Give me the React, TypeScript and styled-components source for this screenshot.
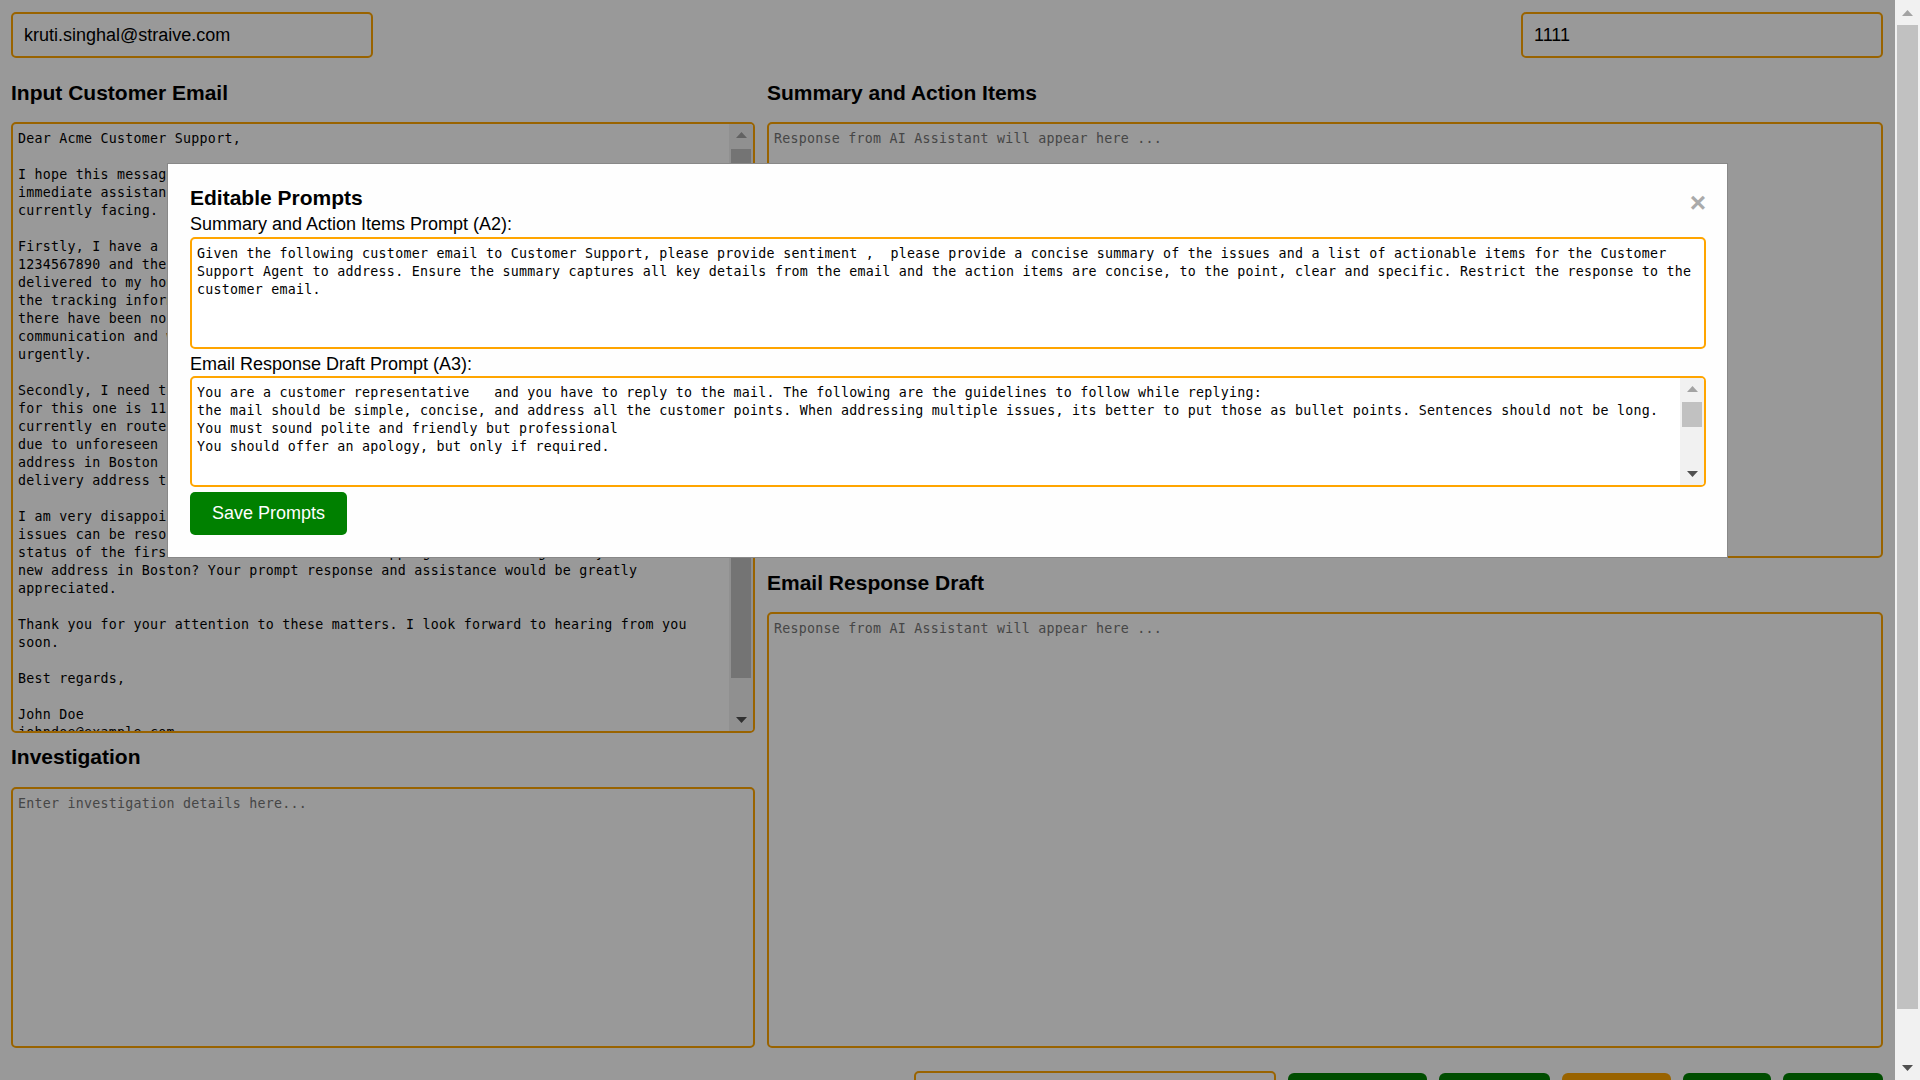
import React from "react";
import styled, { createGlobalStyle } from "styled-components";

const GlobalStyle = createGlobalStyle`
  html, body {
    margin: 0;
    padding: 0;
    background: #ffffff;
    overflow: hidden;
  }
  body {
    font-family: "Liberation Sans", Arial, sans-serif;
    color: #000000;
  }
  *, *::before, *::after {
    box-sizing: border-box;
  }
`;

/* ---------- window frame with its own (drawn) scrollbar ---------- */

const Screen = styled.div`
  display: flex;
  height: 100vh;
  overflow: hidden;
`;

const Viewport = styled.div`
  position: relative;
  flex: 1;
  min-width: 0;
  overflow: hidden;
`;

const Scrollbar = styled.div<{ $width: number }>`
  flex: 0 0 ${(p) => p.$width}px;
  display: flex;
  flex-direction: column;
  background: #f1f1f1;
`;

const ScrollButton = styled.div<{ $size: number }>`
  flex: 0 0 ${(p) => p.$size}px;
  display: flex;
  align-items: center;
  justify-content: center;
`;

const ScrollTrack = styled.div`
  flex: 1;
  min-height: 0;
  padding: 0 2px;
`;

const ScrollThumb = styled.div<{ $offset: number; $length: number }>`
  margin-top: ${(p) => p.$offset}px;
  height: ${(p) => p.$length}px;
  background: #c1c1c1;
`;

function Arrow({ dir, color }: { dir: "up" | "down"; color: string }) {
  return (
    <svg width="11" height="6" viewBox="0 0 11 6" aria-hidden="true">
      <polygon points={dir === "up" ? "5.5,0 11,6 0,6" : "0,0 11,0 5.5,6"} fill={color} />
    </svg>
  );
}

function FakeScrollbar({
  width,
  button,
  offset,
  length,
}: {
  width: number;
  button: number;
  offset: number;
  length: number;
}) {
  return (
    <Scrollbar $width={width}>
      <ScrollButton $size={button}>
        <Arrow dir="up" color="#a3a3a3" />
      </ScrollButton>
      <ScrollTrack>
        <ScrollThumb $offset={offset} $length={length} />
      </ScrollTrack>
      <ScrollButton $size={button}>
        <Arrow dir="down" color="#505050" />
      </ScrollButton>
    </Scrollbar>
  );
}

/* ---------- page ---------- */

const Page = styled.div`
  padding: 12px 12px 30px 11px;
`;

const TopBar = styled.div`
  display: flex;
  justify-content: space-between;
  align-items: center;
`;

const TextField = styled.input<{ $width: number }>`
  width: ${(p) => p.$width}px;
  height: 46px;
  padding: 0 11px;
  border: 2px solid #ffa500;
  border-radius: 5px;
  background: #ffffff;
  color: #000000;
  font-family: "Liberation Sans", Arial, sans-serif;
  font-size: 18px;
  outline: none;
`;

const Columns = styled.div`
  display: grid;
  grid-template-columns: 2fr 3fr;
  column-gap: 12px;
  margin-top: 23px;
`;

const Column = styled.div`
  display: flex;
  flex-direction: column;
  min-width: 0;
`;

const SectionTitle = styled.h3<{ $mt?: number; $mb: number }>`
  margin: ${(p) => p.$mt ?? 0}px 0 ${(p) => p.$mb}px;
  font-size: 21px;
  line-height: 24px;
  font-weight: bold;
  color: #000000;
`;

const FieldBox = styled.div<{ $height: number; $gap?: number }>`
  display: flex;
  height: ${(p) => p.$height}px;
  margin-top: ${(p) => p.$gap ?? 0}px;
  border: 2px solid #ffa500;
  border-radius: 5px;
  background: #ffffff;
  overflow: hidden;
`;

const FieldText = styled.textarea`
  flex: 1;
  min-width: 0;
  height: 100%;
  margin: 0;
  padding: 6px 5px 5px;
  border: none;
  background: transparent;
  color: #000000;
  font-family: "DejaVu Sans Mono", "Liberation Mono", monospace;
  font-size: 13.3px;
  letter-spacing: 0.25px;
  line-height: 18px;
  resize: none;
  outline: none;
  overflow: hidden;
  white-space: pre-wrap;

  &::placeholder {
    color: #757575;
  }
`;

const ActionRow = styled.div`
  display: flex;
  justify-content: flex-end;
  align-items: center;
  gap: 12px;
  margin-top: 23px;
`;

const ActionButton = styled.button<{ $width: number; $tone: "green" | "orange" }>`
  width: ${(p) => p.$width}px;
  height: 42px;
  border: none;
  border-radius: 6px;
  background: ${(p) => (p.$tone === "green" ? "#008000" : "#ffa500")};
  color: #ffffff;
  font-family: "Liberation Sans", Arial, sans-serif;
  font-size: 16px;
  cursor: pointer;
`;

/* ---------- modal ---------- */

const Overlay = styled.div`
  position: absolute;
  inset: 0;
  z-index: 10;
  background: rgba(0, 0, 0, 0.4);
  padding-top: 163px;
`;

const Modal = styled.div`
  width: 1561px;
  margin: 0 auto;
  padding: 20px 21px 22px 22px;
  background: #fefefe;
  border: 1px solid #888888;
  font-family: "Liberation Sans", Arial, sans-serif;
`;

const Close = styled.span`
  float: right;
  margin-top: 3px;
  color: #aaaaaa;
  font-size: 28px;
  line-height: 32px;
  font-weight: bold;
  cursor: pointer;
`;

const ModalTitle = styled.h2`
  margin: 2px 0 0;
  font-size: 21px;
  line-height: 24px;
  font-weight: bold;
  color: #000000;
`;

const PromptLabel = styled.label<{ $gap: number }>`
  display: block;
  margin-top: ${(p) => p.$gap}px;
  font-size: 18px;
  line-height: 21px;
  color: #000000;
`;

const SaveButton = styled.button`
  display: block;
  margin-top: 5px;
  padding: 0 22px;
  height: 43px;
  border: none;
  border-radius: 5px;
  background: #008000;
  color: #ffffff;
  font-family: "Liberation Sans", Arial, sans-serif;
  font-size: 18px;
  cursor: pointer;
`;

/* ---------- content ---------- */

const EMAIL = [
  "Dear Acme Customer Support,",
  "",
  "I hope this message finds you well. I am reaching out to you because I need your",
  "immediate assistance with two separate issues regarding my recent orders that I am",
  "currently facing.",
  "",
  "Firstly, I have a pending order with order number #AC-56789 and tracking number",
  "1234567890 and the package was expected to arrive last week. It was supposed to be",
  "delivered to my home address on Monday, but I have not received it yet. According to",
  "the tracking information the package shows as delivered, but I can assure you that",
  "there have been no deliveries at my address. I have not received any form of",
  "communication and would appreciate it if you could look into this matter",
  "urgently.",
  "",
  "Secondly, I need to update the shipping address for another order. The order number",
  "for this one is 1122334455, and the tracking number is 9876543210. The package is",
  "currently en route to my old address in Chicago. I have recently had to relocate",
  "due to unforeseen circumstances, and I have moved to a new",
  "address in Boston since last week. I kindly request you to update the",
  "delivery address to 45 Elm Street, Boston, MA 02110 as soon as possible.",
  "",
  "I am very disappointed with these inconveniences and would like to know how these",
  "issues can be resolved. Could you please provide an update on the delivery",
  "status of the first order and confirm the shipping address change to my",
  "new address in Boston? Your prompt response and assistance would be greatly",
  "appreciated.",
  "",
  "Thank you for your attention to these matters. I look forward to hearing from you",
  "soon.",
  "",
  "Best regards,",
  "",
  "John Doe",
  "johndoe@example.com",
  "(555) 123-4567",
  "",
].join("\n");

const SUMMARY_PROMPT =
  "Given the following customer email to Customer Support, please provide sentiment ,  please provide a concise summary of the issues and a list of actionable items for the Customer Support Agent to address. Ensure the summary captures all key details from the email and the action items are concise, to the point, clear and specific. Restrict the response to the customer email.";

const DRAFT_PROMPT = [
  "You are a customer representative   and you have to reply to the mail. The following are the guidelines to follow while replying:",
  "the mail should be simple, concise, and address all the customer points. When addressing multiple issues, its better to put those as bullet points. Sentences should not be long.",
  "You must sound polite and friendly but professional",
  "You should offer an apology, but only if required.",
  "",
  "",
  "",
  "",
  "",
  "",
  "",
  "",
  "",
  "",
  "",
  "",
  "",
  "",
].join("\n");

const PLACEHOLDER = "Response from AI Assistant will appear here ...";

export default function App() {
  return (
    <>
      <GlobalStyle />
      <Screen>
        <Viewport>
          <Page>
            <TopBar>
              <TextField $width={362} type="text" defaultValue="kruti.singhal@straive.com" />
              <TextField $width={362} type="text" defaultValue="1111" />
            </TopBar>

            <Columns>
              <Column>
                <SectionTitle $mb={17}>Input Customer Email</SectionTitle>
                <FieldBox $height={611}>
                  <FieldText defaultValue={EMAIL} />
                  <FakeScrollbar width={24} button={22} offset={3} length={529} />
                </FieldBox>
                <SectionTitle $mt={12} $mb={18}>
                  Investigation
                </SectionTitle>
                <FieldBox $height={261}>
                  <FieldText placeholder="Enter investigation details here..." />
                </FieldBox>
              </Column>
              <Column>
                <SectionTitle $mb={17}>Summary and Action Items</SectionTitle>
                <FieldBox $height={436}>
                  <FieldText placeholder={PLACEHOLDER} />
                </FieldBox>
                <SectionTitle $mt={13} $mb={17}>
                  Email Response Draft
                </SectionTitle>
                <FieldBox $height={436}>
                  <FieldText placeholder={PLACEHOLDER} />
                </FieldBox>
              </Column>
            </Columns>

            <ActionRow>
              <TextField $width={362} type="text" placeholder="Enter ticket number" />
              <ActionButton $width={139} $tone="green">Get Summary</ActionButton>
              <ActionButton $width={111} $tone="green">Get Draft</ActionButton>
              <ActionButton $width={109} $tone="orange">Prompts</ActionButton>
              <ActionButton $width={88} $tone="green">Clear</ActionButton>
              <ActionButton $width={100} $tone="green">Logout</ActionButton>
            </ActionRow>
          </Page>

          <Overlay>
            <Modal>
              <Close>&times;</Close>
              <ModalTitle>Editable Prompts</ModalTitle>
              <PromptLabel $gap={4} htmlFor="prompt-a2">
                Summary and Action Items Prompt (A2):
              </PromptLabel>
              <FieldBox $height={112} $gap={2}>
                <FieldText id="prompt-a2" defaultValue={SUMMARY_PROMPT} />
              </FieldBox>
              <PromptLabel $gap={5} htmlFor="prompt-a3">
                Email Response Draft Prompt (A3):
              </PromptLabel>
              <FieldBox $height={111} $gap={1}>
                <FieldText id="prompt-a3" defaultValue={DRAFT_PROMPT} />
                <FakeScrollbar width={24} button={22} offset={2} length={25} />
              </FieldBox>
              <SaveButton>Save Prompts</SaveButton>
            </Modal>
          </Overlay>
        </Viewport>
        <FakeScrollbar width={25} button={25} offset={0} length={984} />
      </Screen>
    </>
  );
}
